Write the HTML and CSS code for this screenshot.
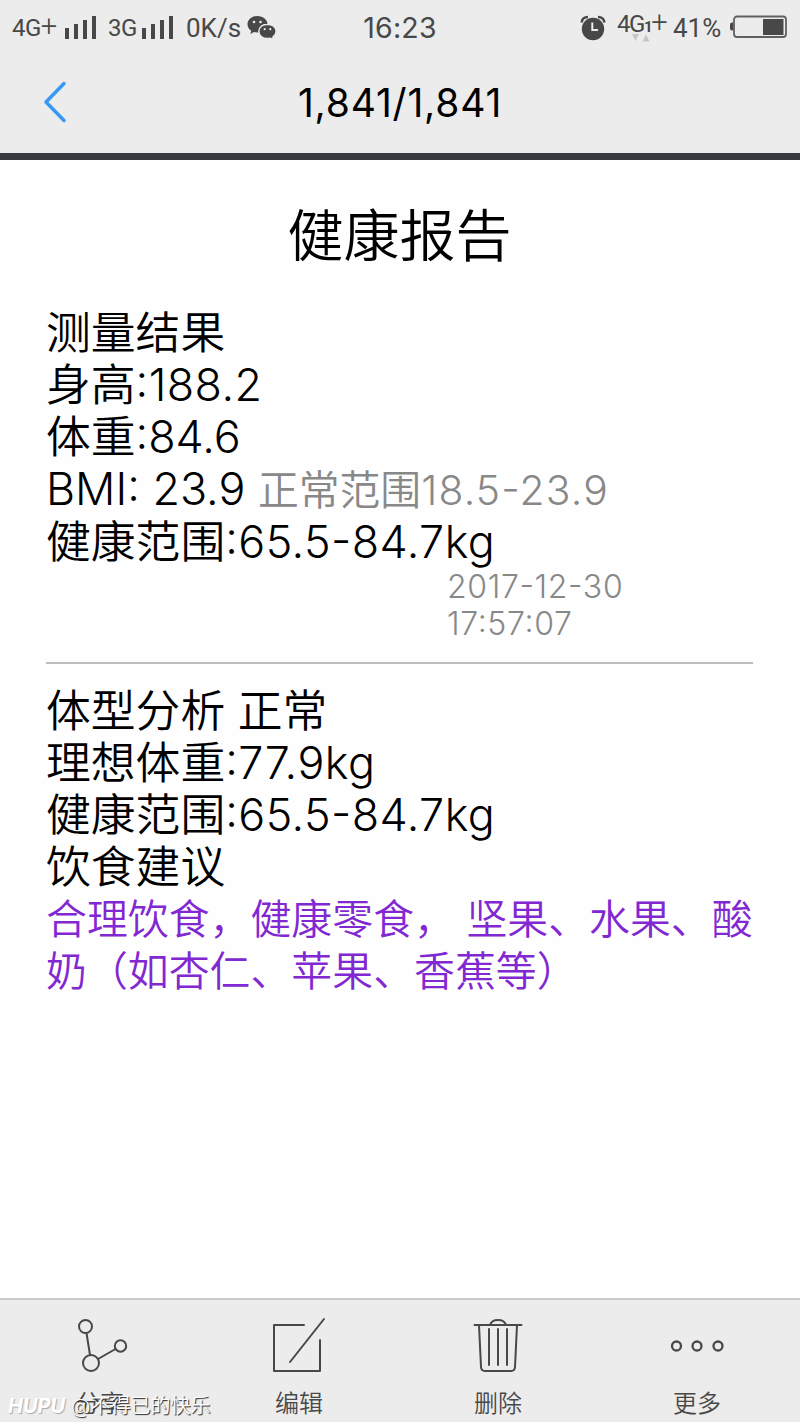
FILE: index.html
```html
<!DOCTYPE html>
<html lang="zh-CN">
<head>
  <meta charset="UTF-8" />
  <meta name="viewport" content="width=device-width, initial-scale=1" />
  <title>健康报告</title>
  <link rel="stylesheet" href="styles.css">
</head>
<body>
  <div class="status">
    <div class="status-left">
      <span class="net net-4g">4G<i>+</i></span>
      <svg class="bars" width="32" height="24" viewBox="0 0 32 24"><path d="M0 12h4v11H0zM9 8h4v15H9zM18 4h4v19h-4zM27 0h4v23h-4z"/></svg>
      <span class="net net-3g">3G</span>
      <svg class="bars" width="32" height="24" viewBox="0 0 32 24"><path d="M0 12h4v11H0zM9 8h4v15H9zM18 4h4v19h-4zM27 0h4v23h-4z"/></svg>
      <span class="speed">0K/s</span>
      <svg class="wechat" width="30" height="26" viewBox="0 0 30 26">
        <path d="M10.500 1C4.800 1 .5 4.700.5 9.300c0 2.700 1.500 5 3.700 6.500L3.300 19l3.700-2c1.100.3 2.300.5 3.500.5C16.200 17.500 20.500 13.800 20.500 9.300S16.200 1 10.500 1z"/>
        <path class="bubble" d="M20.500 9.200c-5 0-8.700 3.200-8.700 7.200s3.700 7.200 8.700 7.200c1 0 2-.2 2.900-.4l3.300 1.800-.8-2.900c1.900-1.300 3.200-3.400 3.200-5.700 0-4-3.700-7.200-8.600-7.200z"/>
        <g class="eyes"><circle cx="7" cy="7" r="1.300"/><circle cx="13.500" cy="7" r="1.300"/><circle cx="17.700" cy="14.200" r="1.100"/><circle cx="23.300" cy="14.200" r="1.100"/></g>
      </svg>
    </div>
    <div class="clock">16:23</div>
    <div class="status-right">
      <svg class="alarm" width="26" height="26" viewBox="0 0 26 26">
        <circle cx="13" cy="14" r="11.200"/>
        <path class="bell" d="M1.500 7.500C2 4 4.500 2 8 2M24.500 7.500C24 4 21.500 2 18 2"/>
        <path class="hands" d="M12.300 7.500V15H18"/>
      </svg>
      <span class="sim">4G<small>1</small><i>+</i>
        <svg class="traffic" width="18" height="8" viewBox="0 0 18 8"><path d="M0 0h7L3.500 7zM10.500 7.500h7L14 .5z"/></svg>
      </span>
      <span class="percent">41%</span>
      <svg class="battery" width="58" height="24" viewBox="0 0 58 24">
        <path d="M4 7.500H3Q1 7.500 1 9.500v4q0 2 2 2h1z"/>
        <rect class="case" x="5" y="1.500" width="52" height="20.500" rx="3"/>
        <path d="M34 4h20.500v16H34z"/>
      </svg>
    </div>
  </div>

  <div class="nav">
    <svg class="back" width="24" height="42" viewBox="0 0 24 42"><path d="M21 2.500L3 21l18 18.500"/></svg>
    <h1>1,841/1,841</h1>
  </div>

  <div class="report">
    <h2>健康报告</h2>
    <div class="lines">
      <p>测量结果</p>
      <p>身高<span class="num">:188.2</span></p>
      <p>体重:84.6</p>
      <p class="bmi">BMI: 23.9 <span class="normal">正常范围<span class="num">18.5-23.9</span></span></p>
      <p>健康范围<span class="num">:65.5-84.7kg</span></p>
    </div>
    <div class="date">2017-12-30<br>17:57:07</div>
    <hr>
    <div class="lines">
      <p>体型分析 正常</p>
      <p>理想体重<span class="num">:77.9kg</span></p>
      <p>健康范围<span class="num">:65.5-84.7kg</span></p>
      <p>饮食建议</p>
    </div>
    <p class="advice">合理饮食，健康零食， 坚果、水果、酸<br>奶（如杏仁、苹果、香蕉等）</p>
  </div>

  <div class="toolbar">
    <div class="tool">
      <svg width="60" height="60" viewBox="0 0 60 60"><circle cx="15.500" cy="12.500" r="6.500"/><circle cx="50.500" cy="32" r="5.700"/><circle cx="21" cy="49" r="8"/><path d="M16.500 19L20 41M28 45l17.500-10"/></svg>
      <span>分享</span>
    </div>
    <div class="tool">
      <svg width="60" height="60" viewBox="0 0 60 60"><path d="M35 11H5v46h46V26M55 5L21 48"/></svg>
      <span>编辑</span>
    </div>
    <div class="tool">
      <svg width="60" height="60" viewBox="0 0 60 60"><path d="M6.500 11h47M22 11C24 4.300 36 4.300 38 11M11 11l2 42q.3 4 4 4h26q3.700 0 4-4l2-42M21 15v36M30 15v36M39 15v36"/></svg>
      <span>删除</span>
    </div>
    <div class="tool">
      <svg class="more" width="60" height="60" viewBox="0 0 60 60"><circle cx="9.500" cy="32" r="4.500"/><circle cx="30" cy="32" r="4.500"/><circle cx="51" cy="32" r="4.500"/></svg>
      <span>更多</span>
    </div>
    <div class="watermark"><b>HUPU</b><span>@不得已的快乐</span></div>
  </div>
</body>
</html>
```

FILE: styles.css
```css
* { box-sizing: border-box; margin: 0; padding: 0; }
body { height: 1422px; display: flex; flex-direction: column; background: #fefefe; color: #000; font-family: Inter, "Noto Sans CJK SC", sans-serif; overflow: hidden; }
svg { display: block; flex: none; }

.status { height: 54px; display: grid; grid-template-columns: 1fr auto 1fr; align-items: center; padding: 1px 12px 0; background: #ececec; color: #484848; fill: #484848; font-family: Roboto, sans-serif; white-space: nowrap; }
.status-left, .status-right { display: flex; align-items: center; }
.status-right { justify-content: flex-end; }
.status i { font-style: normal; font-size: 29px; line-height: 20px; font-weight: 350; }
.net { font-size: 24px; letter-spacing: -0.5px; }
.net-4g { width: 53px; }
.net-3g { width: 34px; margin-left: 11px; }
.speed { width: 55px; margin-left: 12px; font-size: 26px; }
.wechat { margin-left: 6px; }
.bubble { stroke: #ececec; stroke-width: 1.5; }
.eyes { fill: #ececec; }
.clock { font-family: Inter, sans-serif; font-size: 28.5px; letter-spacing: 0.2px; }
.alarm { margin-right: 11px; }
.bell { fill: none; stroke: #484848; stroke-width: 2.5; }
.hands { fill: none; stroke: #ececec; stroke-width: 2; }
.sim { position: relative; width: 49px; margin-right: 7px; margin-top: -8px; font-size: 24px; letter-spacing: -1.4px; }
.sim small { font-size: 15px; font-weight: bold; }
.traffic { position: absolute; left: 15px; top: 24px; fill: #c6c6c6; }
.percent { width: 50px; margin-right: 6px; font-size: 26px; }
.battery { margin-right: 1px; margin-top: -1px; }
.case { fill: none; stroke: #606060; stroke-width: 1.8; }

.nav { height: 106px; display: grid; grid-template-columns: 44px 1fr 44px; align-items: center; padding: 0 43px 4px 43px; background: #ececec; border-bottom: 7px solid #38393e; }
.back { fill: none; stroke: #369af5; stroke-width: 3.5; stroke-linecap: round; stroke-linejoin: round; }
.nav h1 { padding-top: 2px; text-align: center; font-size: 39px; font-weight: 420; letter-spacing: 0.8px; }

.report { flex: 1; padding: 41px 47px 0 46px; font-weight: 350; font-feature-settings: "case"; }
.report h2 { height: 70px; line-height: 70px; text-align: center; font-size: 56px; font-weight: 350; }
.lines { margin-top: 36px; font-size: 44.8px; line-height: 52px; white-space: nowrap; }
.num { letter-spacing: 0.01em; }
.normal { color: #888; font-size: 40.8px; }
.normal .num { letter-spacing: 0.03em; }
.date { margin-left: 401px; margin-top: 0; color: #888; font-size: 32px; line-height: 37px; letter-spacing: 0.02em; }
hr { margin-top: 20px; border: 0; border-top: 2px solid #bdbdbd; }
hr + .lines { margin-top: 21px; }
.advice { color: #8228d2; font-size: 40.9px; line-height: 52.2px; white-space: nowrap; }

.toolbar { position: relative; height: 124px; display: flex; justify-content: space-between; padding: 14px 73px 0 70px; background: #ececec; border-top: 2px solid #cacaca; color: #484848; }
.tool { width: 60px; display: flex; flex-direction: column; align-items: center; }
.tool svg { fill: none; stroke: #484848; stroke-width: 2; stroke-linecap: round; stroke-linejoin: round; }
.tool span { margin-top: 15px; font-size: 24px; font-weight: 350; line-height: 30px; white-space: nowrap; }
.tool .more { stroke-width: 2.3; }
.watermark { position: absolute; left: 8px; bottom: 3px; display: flex; align-items: center; color: #fff; font-size: 20px; line-height: 26px; text-shadow: 1px 1px 1px #222; white-space: nowrap; }
.watermark b { width: 63px; font-style: italic; text-shadow: 1px 1px 1px #aaa; }
.watermark span { font-size: 20px; font-weight: 350; }
```
